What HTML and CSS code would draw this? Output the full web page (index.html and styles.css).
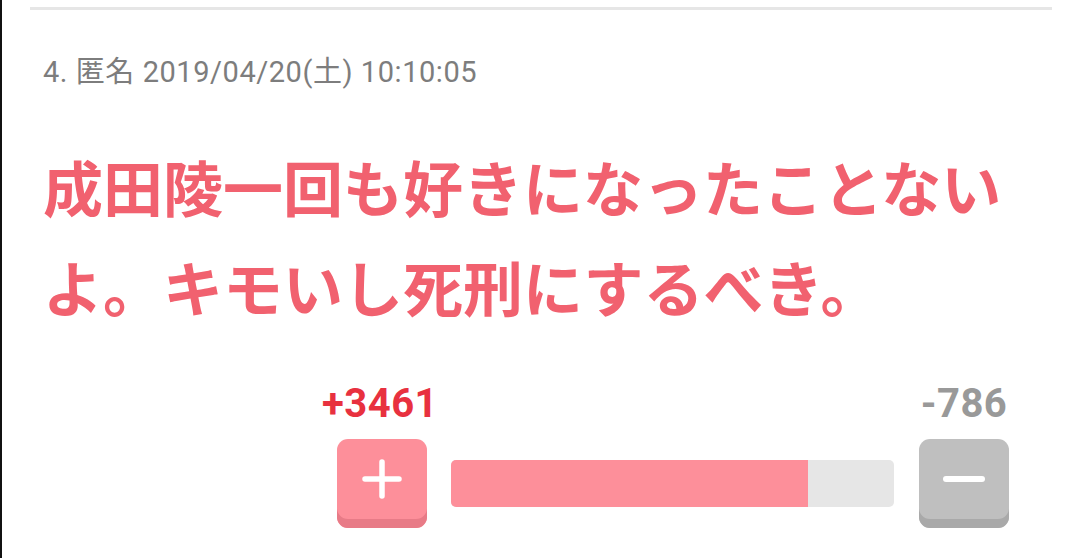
FILE: index.html
```html
<!DOCTYPE html>
<html lang="ja">
<head>
<meta charset="utf-8">
<title>コメント</title>
<link rel="stylesheet" href="styles.css">
</head>
<body>
<div class="page">
  <div class="sep"></div>
  <div class="comment">
    <div class="meta">4. 匿名 2019/04/20(土) 10:10:05</div>
    <div class="msg">成田陵一回も好きになったことないよ。キモいし死刑にするべき。</div>
  </div>
  <div class="votes">
    <div class="vcol">
      <div class="count plus-count">+3461</div>
      <div class="btn btn-plus">
        <svg width="44" height="44" viewBox="0 0 44 44"><path d="M22 5v34M5 22h34" stroke="#fff" stroke-width="5.5" stroke-linecap="round" fill="none"/></svg>
      </div>
    </div>
    <div class="bar"><div class="fill" style="width:80.6%"></div></div>
    <div class="vcol">
      <div class="count minus-count">-786</div>
      <div class="btn btn-minus">
        <svg width="44" height="44" viewBox="0 0 44 44"><path d="M4 22h36" stroke="#fff" stroke-width="6" stroke-linecap="round" fill="none"/></svg>
      </div>
    </div>
  </div>
</div>
</body>
</html>
```

FILE: styles.css
```css
html, body {
  margin: 0;
  padding: 0;
  background: #fff;
}
body {
  border-left: 2px solid #111;
  height: 558px;
  box-sizing: border-box;
  overflow: hidden;
  font-family: Roboto, "Noto Sans CJK JP", sans-serif;
}
.page {
  width: 1078px;
}
.sep {
  margin: 7px 28px 0 28px;
  height: 3px;
  background: #e6e6e6;
}
.comment {
  padding-left: 41px;
}
.meta {
  margin-top: 42px;
  font-size: 29px;
  line-height: 40px;
  color: #7d7d7d;
  letter-spacing: 0.55px;
}
.msg {
  margin-top: 44px;
  width: 990px;
  font-family: "Noto Sans CJK JP", sans-serif;
  font-weight: 700;
  font-size: 60px;
  line-height: 100px;
  color: #f1616f;
}
.votes {
  margin-top: 46px;
  display: flex;
  justify-content: flex-end;
  align-items: flex-end;
  padding-right: 71px;
}
.vcol {
  display: flex;
  flex-direction: column;
  align-items: center;
  width: 90px;
}
.count {
  font-family: Roboto, sans-serif;
  font-weight: 700;
  font-size: 40px;
  line-height: 44px;
  margin-bottom: 13px;
  white-space: nowrap;
}
.plus-count { color: #e8313f; margin-right: 4px; letter-spacing: 0.5px; }
.minus-count { color: #999; letter-spacing: 0.5px; }
.btn {
  width: 90px;
  height: 89px;
  border-radius: 11px;
  box-sizing: border-box;
  padding-bottom: 9px;
  display: flex;
  align-items: center;
  justify-content: center;
}
.btn-plus {
  background: #fd8f9a;
  box-shadow: inset 0 -9px 0 #e87b87;
}
.btn-minus {
  background: #bfbfbf;
  box-shadow: inset 0 -9px 0 #a9a9a9;
}
.bar {
  width: 443px;
  height: 47px;
  margin: 0 25px 21px 24px;
  background: #e6e6e6;
  border-radius: 5px;
  overflow: hidden;
}
.fill {
  height: 100%;
  background: #fd8f9a;
}
```
